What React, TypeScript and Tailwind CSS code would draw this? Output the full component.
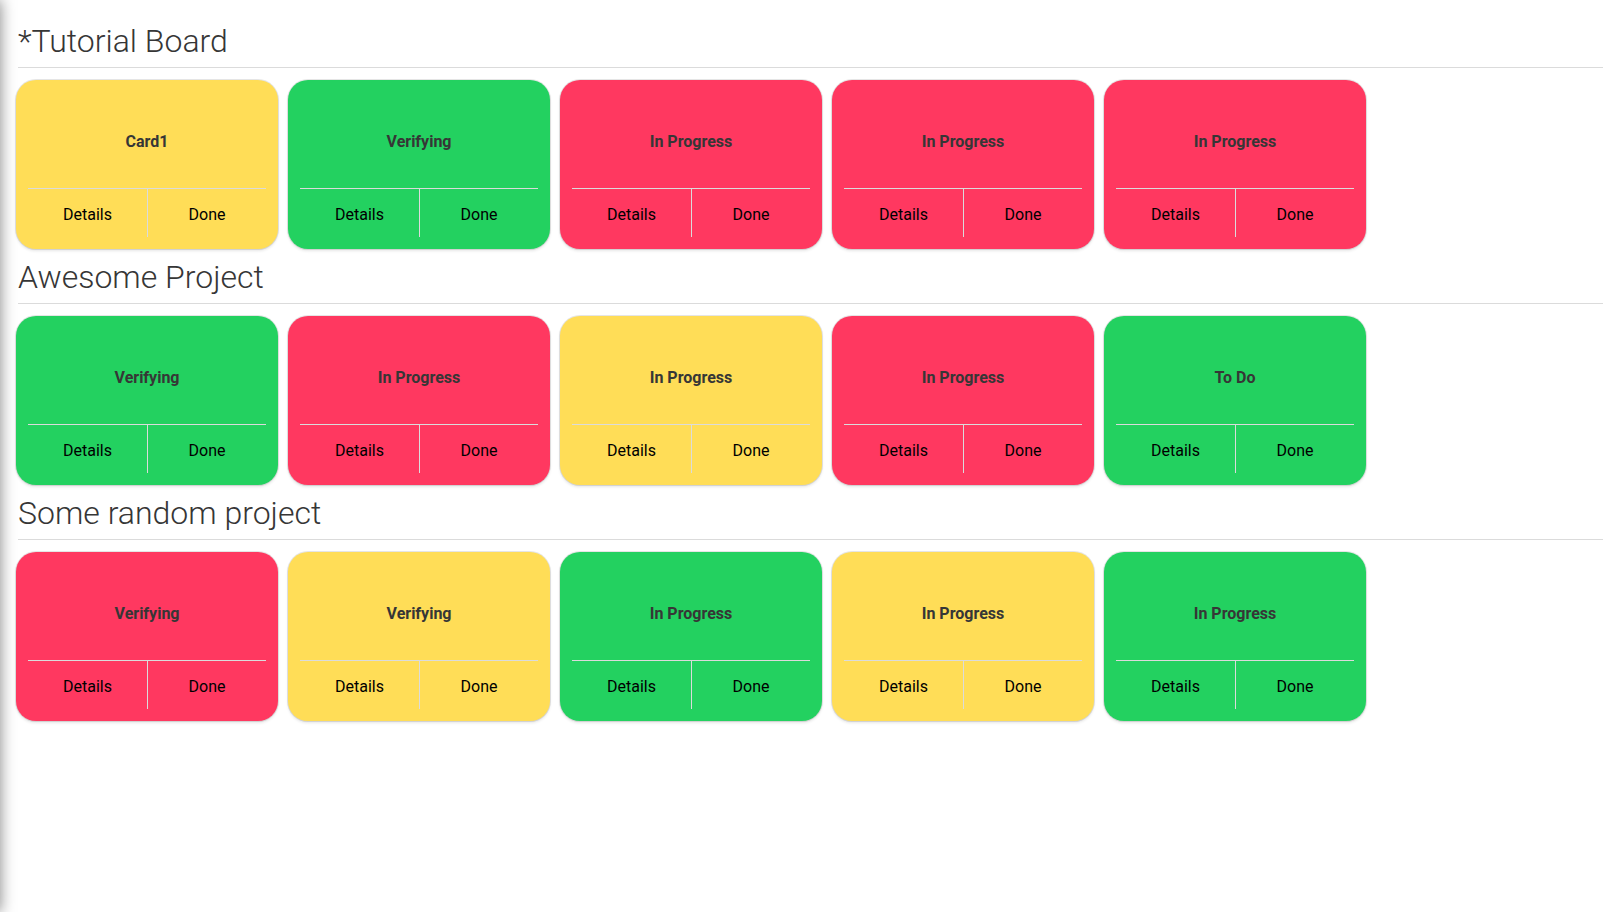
type Tone = "yellow" | "green" | "red";

interface CardData {
  title: string;
  tone: Tone;
}

interface Board {
  name: string;
  cards: CardData[];
}

const toneClass: Record<Tone, string> = {
  yellow: "bg-[#ffdd57]",
  green: "bg-[#23d160]",
  red: "bg-[#ff3860]",
};

const boards: Board[] = [
  {
    name: "*Tutorial Board",
    cards: [
      { title: "Card1", tone: "yellow" },
      { title: "Verifying", tone: "green" },
      { title: "In Progress", tone: "red" },
      { title: "In Progress", tone: "red" },
      { title: "In Progress", tone: "red" },
    ],
  },
  {
    name: "Awesome Project",
    cards: [
      { title: "Verifying", tone: "green" },
      { title: "In Progress", tone: "red" },
      { title: "In Progress", tone: "yellow" },
      { title: "In Progress", tone: "red" },
      { title: "To Do", tone: "green" },
    ],
  },
  {
    name: "Some random project",
    cards: [
      { title: "Verifying", tone: "red" },
      { title: "Verifying", tone: "yellow" },
      { title: "In Progress", tone: "green" },
      { title: "In Progress", tone: "yellow" },
      { title: "In Progress", tone: "green" },
    ],
  },
];

function Card({ title, tone }: CardData) {
  return (
    <article
      className={`w-[262px] rounded-[20px] p-3 shadow-[0_2px_3px_rgba(10,10,10,0.1),0_0_0_1px_rgba(10,10,10,0.1)] ${toneClass[tone]}`}
    >
      <h2 className="flex h-24 items-center justify-center pt-1 text-base font-bold text-[#363636]">
        {title}
      </h2>
      <footer className="grid grid-cols-2 border-t border-[#dbdbdb]">
        <button type="button" className="h-12 pt-1 text-base text-black">
          Details
        </button>
        <button type="button" className="h-12 border-l border-[#dbdbdb] pt-1 text-base text-black">
          Done
        </button>
      </footer>
    </article>
  );
}

export default function App() {
  return (
    <div className="flex min-h-screen overflow-hidden bg-white font-['Roboto',sans-serif] [text-rendering:optimizeLegibility]">
      <div
        className="-ml-10 w-10 shrink-0 shadow-[0_0_15px_rgba(10,10,10,0.5)]"
        aria-hidden="true"
      />
      <main className="min-w-0 flex-1 pt-[13px] pr-5 pl-4">
        {boards.map((board) => (
          <section key={board.name}>
            <h1 className="ml-0.5 h-[55px] border-b border-[#dbdbdb] pt-2 text-[32px] leading-10 font-light text-[#363636]">
              {board.name}
            </h1>
            <div className="flex flex-wrap gap-2.5 pt-3">
              {board.cards.map((card, index) => (
                <Card key={index} title={card.title} tone={card.tone} />
              ))}
            </div>
          </section>
        ))}
      </main>
    </div>
  );
}
